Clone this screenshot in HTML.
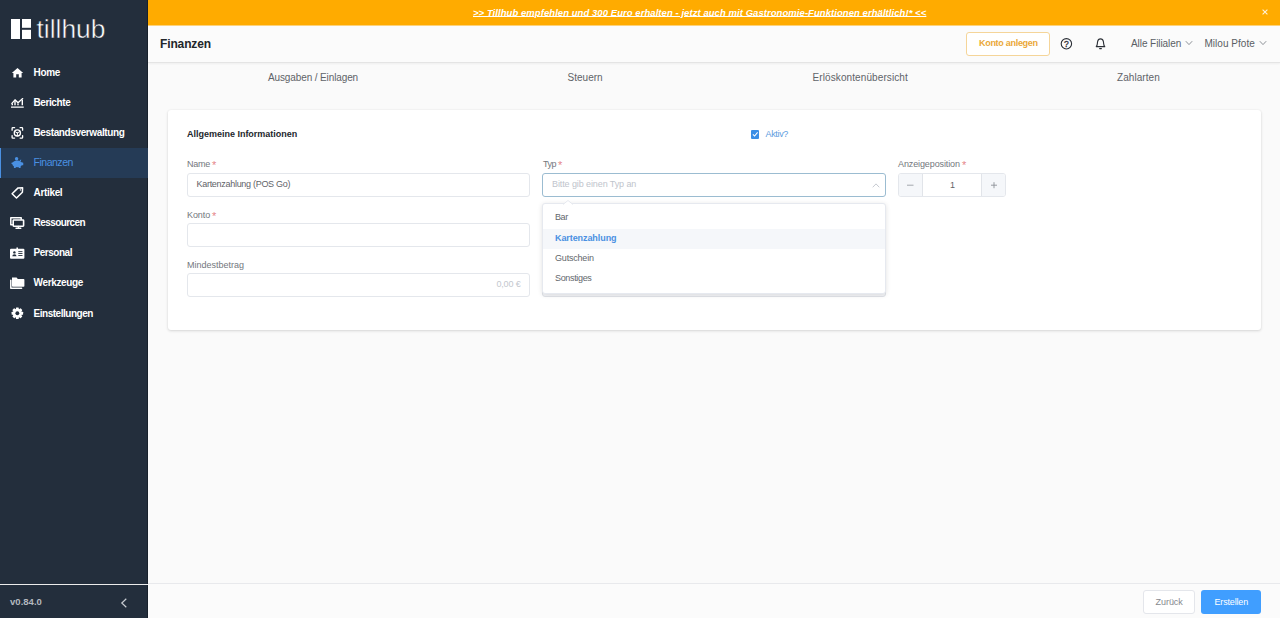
<!DOCTYPE html>
<html lang="de">
<head>
<meta charset="utf-8">
<title>Tillhub Dashboard</title>
<style>
*{box-sizing:border-box;margin:0;padding:0}
html,body{width:1280px;height:618px;overflow:hidden;background:#fafafa;font-family:"Liberation Sans",sans-serif;color:#606266}
span,div{white-space:nowrap}
#side{position:absolute;left:0;top:0;width:148px;height:618px;background:#232e3c;color:#fff;border-right:1px solid #18212c}
#logo{position:absolute;left:0;top:0;width:148px;height:56px}
.nav{position:absolute;left:0;width:148px;height:30px;font-size:10px;font-weight:bold;color:#fff}
.nav span{position:absolute;left:33.5px;top:0;line-height:30px}
.nav svg{position:absolute;overflow:visible}
.nav.act{background:#253b56;color:#4a90e2;border-left:1px solid #4a90e2}
.nav.act span{left:32.5px;font-weight:normal;font-size:10.5px;line-height:29px}
#sfoot{position:absolute;left:0;top:584px;width:148px;height:34px;border-top:1px solid #ececec;color:#b4b9bf;font-size:9.5px;font-weight:bold}
#sfoot span{position:absolute;left:10px;top:0;line-height:33.5px}
#sfoot svg{position:absolute;left:120px;top:13px;width:8px;height:10px}
#banner{position:absolute;left:148px;top:0;width:1132px;height:25px;background:#ffab00;border-bottom:0;color:#fff;font-size:9.5px;font-weight:bold;font-style:italic;line-height:25px}
#btxt{position:absolute;left:325px;top:0;text-decoration:underline;text-underline-offset:-0.4px;text-decoration-thickness:1px}
#bx{position:absolute;left:1113.2px;top:8.4px;width:8px;height:8px;opacity:.85}
#hdr{position:absolute;left:148px;top:26px;width:1132px;height:37px;background:#fbfbfb;border-bottom:1px solid #e4e4e4;box-shadow:0 1px 2px rgba(0,0,0,.05)}
#h1{position:absolute;left:12px;top:1px;line-height:35px;font-size:12px;color:#22262b;font-weight:bold}
#kbtn{position:absolute;left:818px;top:6px;width:84px;height:24px;border:1px solid #f5d599;border-radius:3px;background:#fff;color:#eaa838;font-size:9px;font-weight:bold;line-height:21px}
#kbtn span{position:absolute;left:12px;top:0}
.hsel{position:absolute;top:0;line-height:35px;font-size:10px;color:#5a5e64}
.tab{position:absolute;top:64px;height:30px;line-height:28px;font-size:10px;color:#5f6368}
#card{position:absolute;left:168px;top:110px;width:1093px;height:220px;background:#fff;border-radius:3px;box-shadow:0 1px 3px rgba(0,0,0,.14),0 0 2px rgba(0,0,0,.05)}
.lbl{position:absolute;font-size:9px;color:#73777d;line-height:12px}
.lbl i{font-style:normal;color:#e5878a;margin-left:2px;font-size:11px;line-height:0;position:relative;top:1.5px}
.inp{position:absolute;height:24px;border:1px solid #e4e7ec;border-radius:3px;background:#fff;font-size:9px;color:#5f6368;line-height:21px}
.inp span{position:absolute;top:0}
#dd{position:absolute;left:374px;top:93px;width:343.5px;height:90.5px;background:#fff;border:1px solid #e6e9ef;border-radius:3px;box-shadow:0 1px 5px rgba(0,0,0,.12)}
.opt{position:absolute;left:0;width:100%;height:20.5px;line-height:20.5px;font-size:9px;color:#63676c}
.opt span{position:absolute;left:12px;top:0}
#foot{position:absolute;left:148px;top:583px;width:1132px;height:35px;background:#fbfbfb;border-top:1px solid #e8e9ec}
.btn{position:absolute;top:6px;height:24px;border-radius:3px;font-size:9px;line-height:22px}
.btn span{position:absolute;top:0}
/*FIT*/
#n1{letter-spacing:-0.29px}
#n2{letter-spacing:-0.40px}
#n3{letter-spacing:-0.38px}
#n4{letter-spacing:-0.48px}
#n5{letter-spacing:-0.33px}
#n6{letter-spacing:-0.57px}
#n7{letter-spacing:-0.47px}
#n8{letter-spacing:-0.34px}
#n9{letter-spacing:-0.47px}
#ver{letter-spacing:0.03px}
#btxt{letter-spacing:0.06px}
#h1t{letter-spacing:-0.13px}
#kt{letter-spacing:-0.29px}
#hs1{letter-spacing:-0.07px}
#hs2{letter-spacing:0.03px}
#t1{letter-spacing:-0.12px}
#t2{letter-spacing:0.02px}
#t3{letter-spacing:0.10px}
#t4{letter-spacing:0.06px}
#c0{letter-spacing:-0.01px}
#c1{letter-spacing:-0.34px}
#l1{letter-spacing:-0.23px}
#l2{letter-spacing:-0.09px}
#l3{letter-spacing:0.00px}
#l4{letter-spacing:-0.54px}
#l5{letter-spacing:-0.11px}
#i1{letter-spacing:-0.29px}
#i3{letter-spacing:-0.16px}
#i4{letter-spacing:-0.10px}
#o1{letter-spacing:-0.44px}
#o2{letter-spacing:-0.08px}
#o3{letter-spacing:-0.19px}
#o4{letter-spacing:-0.34px}
#b1{letter-spacing:-0.04px}
#b2{letter-spacing:-0.17px}
/*ENDFIT*/
</style>
</head>
<body>
<div id="side">
  <svg id="logo" viewBox="0 0 148 56"><g fill="#fff"><rect x="11" y="19" width="9" height="20"/><rect x="22" y="19" width="9" height="8.8"/><rect x="22" y="29.8" width="9" height="9.2"/></g><text id="logot" x="36.5" y="38" font-family="Liberation Sans, sans-serif" font-size="26" fill="#fff" stroke="#232e3c" stroke-width="0.5" textLength="69" lengthAdjust="spacingAndGlyphs">tillhub</text></svg>
  <div class="nav" style="top:58px"><span id="n1">Home</span></div>
  <div class="nav" style="top:88px"><span id="n2">Berichte</span></div>
  <div class="nav" style="top:118px"><span id="n3">Bestandsverwaltung</span></div>
  <div class="nav act" style="top:148px"><span id="n4">Finanzen</span></div>
  <div class="nav" style="top:178px"><span id="n5">Artikel</span></div>
  <div class="nav" style="top:208px"><span id="n6">Ressourcen</span></div>
  <div class="nav" style="top:238px"><span id="n7">Personal</span></div>
  <div class="nav" style="top:268px"><span id="n8">Werkzeuge</span></div>
  <div class="nav" style="top:298.5px"><span id="n9">Einstellungen</span></div>
<svg id="icons" viewBox="0 0 148 618" style="position:absolute;left:0;top:0;width:148px;height:618px;pointer-events:none">
<g fill="#fff" stroke="none">
<path d="M17.5 68 L23.2 73 L21.6 73 L21.6 77.5 L18.8 77.5 L18.8 74.3 L16.2 74.3 L16.2 77.5 L13.4 77.5 L13.4 73 L11.8 73 Z"/>
<rect x="11" y="106.5" width="12.75" height="1.25"/>
</g>
<g fill="none" stroke="#fff" stroke-width="1.3" stroke-linejoin="round" stroke-linecap="round">
<path d="M11.9 103.4 L15 99.8 L18 102.8 L22.7 98.6"/>
<path d="M12.3 103.6 V105.2 M15 100.6 V105.2 M18 103.4 V105.2 M22.3 99.8 V105.2" stroke-linecap="butt" stroke-width="1.4"/>
<path d="M12.1 130.2 V128.4 Q12.1 127.7 12.8 127.7 H14.6 M20.1 127.7 H21.9 Q22.6 127.7 22.6 128.4 V130.2 M12.1 135.6 V137.4 Q12.1 138.1 12.8 138.1 H14.6 M20.1 138.1 H21.9 Q22.6 138.1 22.6 137.4 V135.6"/>
<circle cx="17.35" cy="132.9" r="3.1"/>
<path d="M17.35 133 V135.8 M17.35 133 L14.9 131.5 M17.35 133 L19.8 131.5" stroke-width="1"/>
<path d="M12.1 193.7 L18.1 187.9 L22.6 187.8 L22.4 192.2 L16.5 198 Z" stroke-width="1.5"/>
<path d="M12.4 224.8 H10.8 V217.8 H21.2 V219.3" stroke-width="1.5"/>
<rect x="13.2" y="220" width="10.4" height="6.2" rx="0.6" stroke-width="1.6"/>
<path d="M18.4 226.5 V228 M16 228.2 H20.8" stroke-width="1.4"/>
<path d="M10.8 280.2 V288.2 H21.6" stroke-width="1.5"/>
</g>
<circle cx="20.5" cy="189.9" r="0.7" fill="#fff"/>
<g fill="#4a90e2">
<circle cx="16.6" cy="158.7" r="1.7"/>
<ellipse cx="17.2" cy="163.9" rx="4.9" ry="3.3"/>
<rect x="13.9" y="165.6" width="1.9" height="2.5" rx="0.3"/><rect x="18.7" y="165.6" width="1.9" height="2.5" rx="0.3"/>
<rect x="21" y="162.4" width="2.25" height="2.8" rx="0.5"/><rect x="11.5" y="162.6" width="1.6" height="1.5" rx="0.4"/>
<path d="M19.5 160.2 L21.2 159.6 L20.9 161.6 Z"/>
</g>
<g fill="#fff">
<rect x="10" y="248.7" width="14.4" height="10" rx="1"/><rect x="16.4" y="247.5" width="1.6" height="2"/>
<path d="M12 277.5 H16.6 L17.8 279 H23.6 Q24.4 279 24.4 279.8 V286 Q24.4 286.8 23.6 286.8 H12.8 Q12 286.8 12 286 Z"/>
<circle cx="17.35" cy="313.25" r="4.5"/><rect x="15.95" y="307.5" width="2.8" height="3" rx="0.5" transform="rotate(0 17.35 313.25)"/><rect x="15.95" y="307.5" width="2.8" height="3" rx="0.5" transform="rotate(45 17.35 313.25)"/><rect x="15.95" y="307.5" width="2.8" height="3" rx="0.5" transform="rotate(90 17.35 313.25)"/><rect x="15.95" y="307.5" width="2.8" height="3" rx="0.5" transform="rotate(135 17.35 313.25)"/><rect x="15.95" y="307.5" width="2.8" height="3" rx="0.5" transform="rotate(180 17.35 313.25)"/><rect x="15.95" y="307.5" width="2.8" height="3" rx="0.5" transform="rotate(225 17.35 313.25)"/><rect x="15.95" y="307.5" width="2.8" height="3" rx="0.5" transform="rotate(270 17.35 313.25)"/><rect x="15.95" y="307.5" width="2.8" height="3" rx="0.5" transform="rotate(315 17.35 313.25)"/>
</g>
<g fill="#232e3c">
<circle cx="14.4" cy="252.4" r="1.2"/><path d="M12.3 256.2 Q12.3 254.2 14.4 254.2 Q16.5 254.2 16.5 256.2 Z"/>
<rect x="18.3" y="251.2" width="4.2" height="0.9"/><rect x="18.3" y="253.1" width="4.2" height="0.9"/><rect x="18.3" y="255" width="4.2" height="0.9"/>
<circle cx="17.35" cy="313.25" r="1.9"/>
</g>
</svg>
  <div id="sfoot"><span id="ver">v0.84.0</span><svg viewBox="0 0 8 10"><path d="M6.3 0.8 L1.8 5 L6.3 9.2" fill="none" stroke="#c9cdd2" stroke-width="1.2"/></svg></div>
</div>
<div id="banner"><span id="btxt">&gt;&gt; Tillhub empfehlen und 300 Euro erhalten - jetzt auch mit Gastronomie-Funktionen erhältlich!* &lt;&lt;</span><svg id="bx" viewBox="0 0 8 8"><path d="M1.6 1.6L6.4 6.4M6.4 1.6L1.6 6.4" stroke="#fff" stroke-width="1.1" fill="none"/></svg></div>
<div style="position:absolute;left:148px;top:25px;width:1132px;height:1px;background:#fcd27c"></div>
<div id="hdr">
  <div id="h1"><span id="h1t">Finanzen</span></div>
  <div id="kbtn"><span id="kt">Konto anlegen</span></div>
  <svg style="position:absolute;left:911px;top:11px;width:14px;height:14px" viewBox="0 0 14 14"><circle cx="7.4" cy="6.8" r="5.2" fill="none" stroke="#2b2f36" stroke-width="1.1"/><text x="7.4" y="9.8" text-anchor="middle" font-family="Liberation Sans, sans-serif" font-size="8.5" fill="#2b2f36" stroke="#2b2f36" stroke-width="0.3">?</text></svg>
  <svg style="position:absolute;left:946px;top:11px;width:14px;height:14px" viewBox="0 0 14 14"><path d="M2.2 9.6 C3.6 8.6 3.2 6.6 3.6 4.6 C4 2.6 5.4 1.9 6.5 1.9 C7.6 1.9 9 2.6 9.4 4.6 C9.8 6.6 9.4 8.6 10.8 9.6 Z" fill="none" stroke="#2b2f36" stroke-width="1.1" stroke-linejoin="round"/><path d="M5.6 11.6 H7.4" stroke="#2b2f36" stroke-width="1.1" stroke-linecap="round"/></svg>
  <div class="hsel" style="left:983px"><span id="hs1">Alle Filialen</span></div>
  <svg style="position:absolute;left:1037px;top:14px;width:8px;height:6px" viewBox="0 0 8 6"><path d="M0.8 1.2L4 4.6L7.2 1.2" fill="none" stroke="#8d9197" stroke-width="1"/></svg>
  <div class="hsel" style="left:1056.5px"><span id="hs2">Milou Pfote</span></div>
  <svg style="position:absolute;left:1111px;top:14px;width:8px;height:6px" viewBox="0 0 8 6"><path d="M0.8 1.2L4 4.6L7.2 1.2" fill="none" stroke="#8d9197" stroke-width="1"/></svg>
</div>
<div class="tab" style="left:268px"><span id="t1">Ausgaben / Einlagen</span></div>
<div class="tab" style="left:567.5px"><span id="t2">Steuern</span></div>
<div class="tab" style="left:812.5px"><span id="t3">Erlöskontenübersicht</span></div>
<div class="tab" style="left:1117px"><span id="t4">Zahlarten</span></div>
<div id="card">
  <div class="lbl" style="left:19px;top:18px;font-weight:bold;color:#23272c;font-size:9px"><span id="c0">Allgemeine Informationen</span></div>
  <div style="position:absolute;left:582.5px;top:20px;width:8.5px;height:8.5px;background:#3a8ee6;border-radius:1px"><svg viewBox="0 0 9 9" style="position:absolute;left:0;top:0;width:8.5px;height:8.5px"><path d="M2 4.6L3.8 6.4L7 2.6" fill="none" stroke="#fff" stroke-width="1.1"/></svg></div>
  <div class="lbl" style="left:597.5px;top:18px;color:#5c9bde"><span id="c1">Aktiv?</span></div>

  <div class="lbl" style="left:19px;top:48px"><span id="l1">Name</span><i>*</i></div>
  <div class="inp" style="left:19px;top:62.5px;width:343px"><span id="i1" style="left:8.5px">Kartenzahlung (POS Go)</span></div>
  <div class="lbl" style="left:19px;top:99px"><span id="l2">Konto</span><i>*</i></div>
  <div class="inp" style="left:19px;top:113px;width:343px"></div>
  <div class="lbl" style="left:19px;top:148.5px"><span id="l3">Mindestbetrag</span></div>
  <div class="inp" style="left:19px;top:163px;width:343px;color:#c3c7ce"><span id="i3" style="right:8.5px">0,00 €</span></div>

  <div class="lbl" style="left:375px;top:48px"><span id="l4">Typ</span><i>*</i></div>
  <div class="inp" style="left:374px;top:62.5px;width:344px;border-color:#9bbcd1;color:#c0c4cc"><span id="i4" style="left:9px">Bitte gib einen Typ an</span><svg viewBox="0 0 8 5" style="position:absolute;left:329px;top:9px;width:8px;height:5px"><path d="M0.7 4.3L4 0.9L7.3 4.3" fill="none" stroke="#c0c4cc" stroke-width="0.9"/></svg></div>
  <div class="inp" style="left:374px;top:163px;width:344px;background:#f4f5f8;border-color:#e0e3e8"></div>

  <div class="lbl" style="left:730px;top:48px"><span id="l5">Anzeigeposition</span><i>*</i></div>
  <div class="inp" style="left:730px;top:62.5px;width:108px;overflow:hidden">
    <div style="position:absolute;left:0;top:0;width:24px;height:22px;background:#f5f7fa;border-right:1px solid #e1e4e9"></div>
    <div style="position:absolute;right:0;top:0;width:24px;height:22px;background:#f5f7fa;border-left:1px solid #e1e4e9"></div>
    <svg viewBox="0 0 108 22" style="position:absolute;left:-1px;top:0;width:108px;height:22px"><path d="M9 11.2H15.5" stroke="#9a9ea5" stroke-width="0.9"/><path d="M93 11.2H99M96 8.2V14.2" stroke="#8d9197" stroke-width="0.9"/></svg>
    <span id="i5" style="left:51px;top:1px;color:#5f6368">1</span>
  </div>

  <div id="dd">
    <svg viewBox="0 0 10 5" style="position:absolute;left:20px;top:-4px;width:10px;height:5px"><path d="M0 4.5L5 0.5L10 4.5" fill="#fff" stroke="#e6e9ef" stroke-width="1"/></svg>
    <div class="opt" style="top:3px"><span id="o1">Bar</span></div>
    <div class="opt" style="top:24.5px;line-height:19px;background:#f5f7fa;color:#4a90e2;font-weight:bold"><span id="o2">Kartenzahlung</span></div>
    <div class="opt" style="top:44px"><span id="o3">Gutschein</span></div>
    <div class="opt" style="top:64px"><span id="o4">Sonstiges</span></div>
  </div>
</div>
<div id="foot">
  <div class="btn" style="left:995px;width:52px;border:1px solid #e4e6eb;background:#fff;color:#85888e"><span id="b1" style="left:11.5px">Zurück</span></div>
  <div class="btn" style="left:1053px;width:59.5px;background:#409eff;color:#fff;line-height:24px"><span id="b2" style="left:13.5px">Erstellen</span></div>
</div>
</body>
</html>
